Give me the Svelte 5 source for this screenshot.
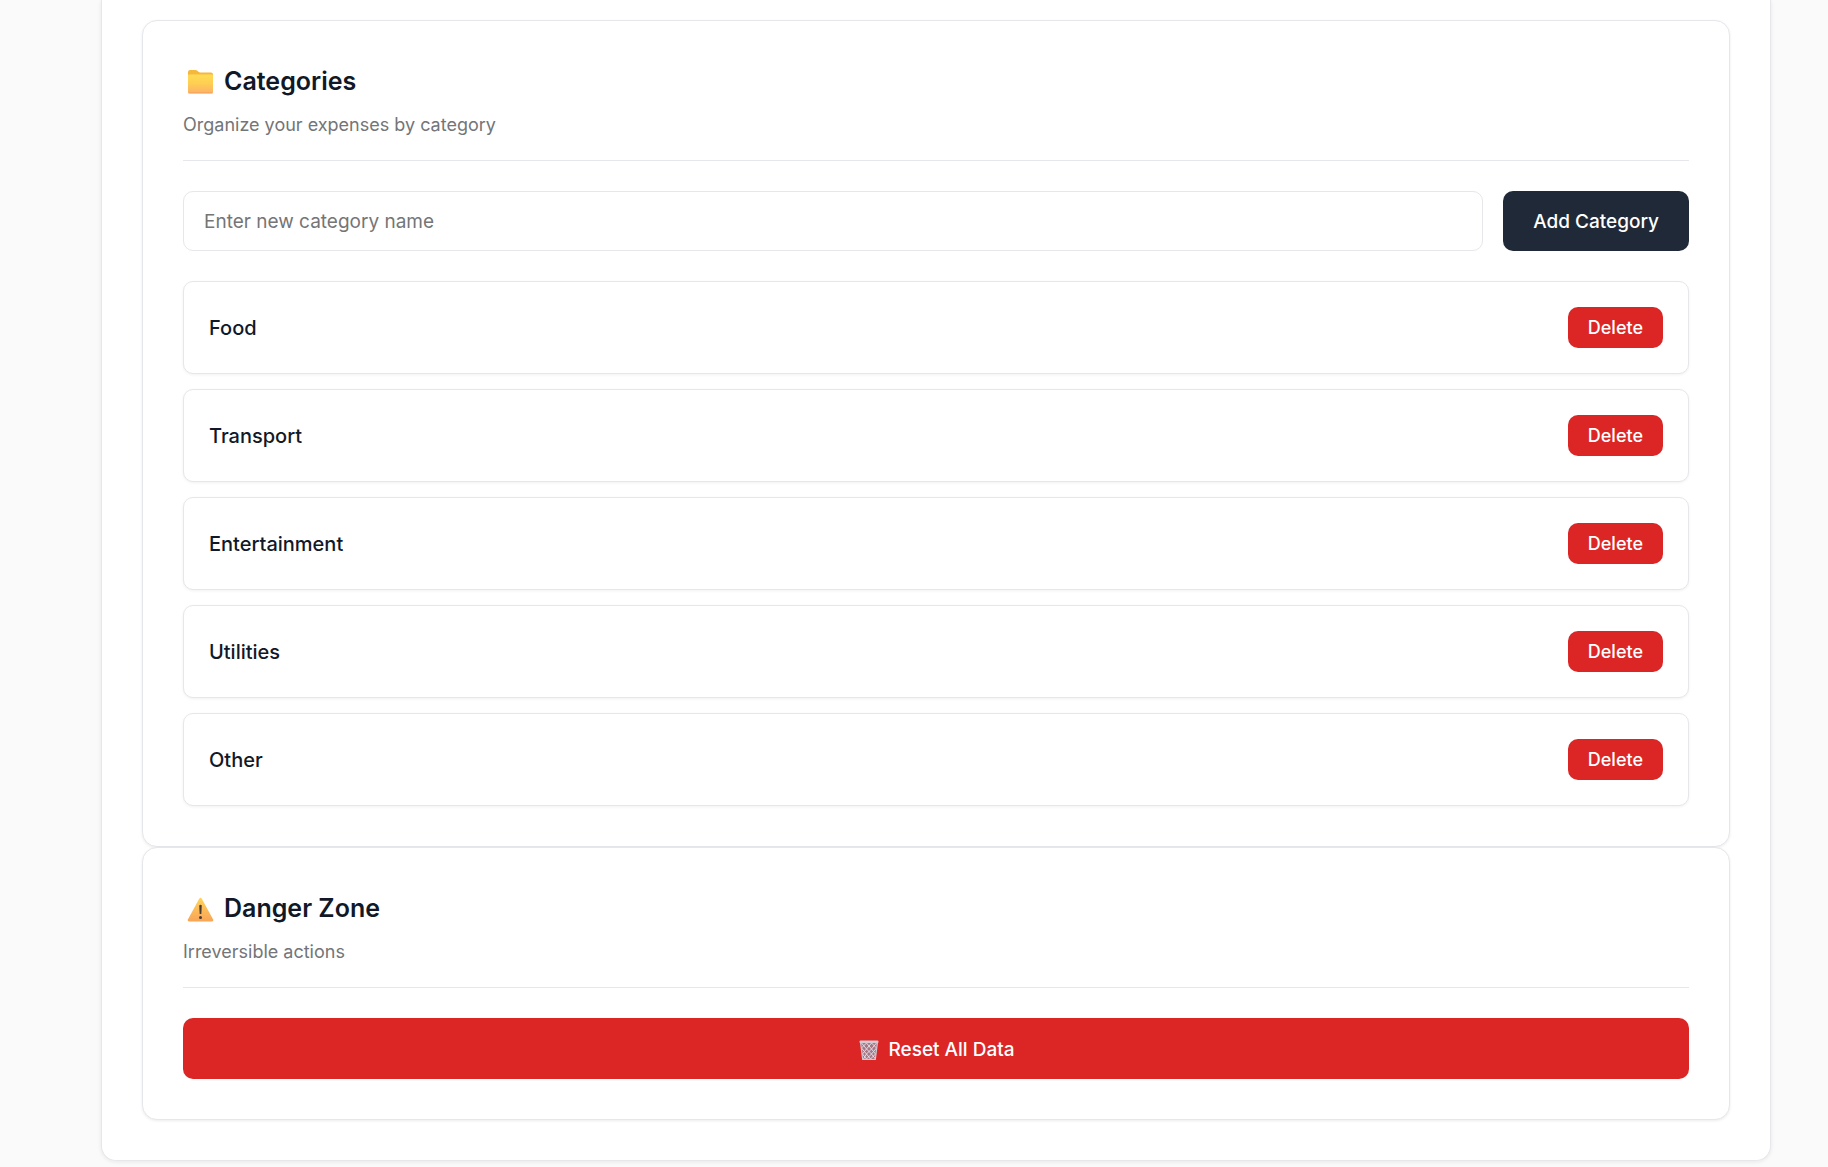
<script lang="ts">
  interface Category {
    id: number;
    name: string;
  }

  const defaults = ['Food', 'Transport', 'Entertainment', 'Utilities', 'Other'];

  let nextId = defaults.length;
  let categories = $state<Category[]>(defaults.map((name, id) => ({ id, name })));
  let newName = $state('');

  function addCategory(ev: SubmitEvent) {
    ev.preventDefault();
    const name = newName.trim();
    if (!name) return;
    categories.push({ id: nextId++, name });
    newName = '';
  }

  function removeCategory(id: number) {
    categories = categories.filter((c) => c.id !== id);
  }

  function resetAll() {
    categories = defaults.map((name) => ({ id: nextId++, name }));
    newName = '';
  }
</script>

<main class="page">
  <div class="panel">
    <section class="card">
      <header class="card-header">
        <h2>
          <svg class="title-icon" viewBox="0 1 32 32" aria-hidden="true">
            <defs>
              <linearGradient id="folder-front" x1="0" y1="0" x2="0" y2="1">
                <stop offset="0" stop-color="#ffdc55" />
                <stop offset="0.45" stop-color="#ffcf52" />
                <stop offset="1" stop-color="#fbb167" />
              </linearGradient>
            </defs>
            <path d="M5 8q0-2 2-2h5.500q1 0 1.800.700l1.200 1.100q.700.700 1.700.700H28q2 0 2 2V14H5z" fill="#f5b83d" />
            <path d="M5 11.500q0-1 1-1h23q1 0 1 1V28q0 1.500-1.500 1.500h-22Q5 29.500 5 28z" fill="url(#folder-front)" />
            <path d="M5.500 28.800h24" stroke="#f2a35c" stroke-width="1" />
          </svg>
          Categories
        </h2>
        <p>Organize your expenses by category</p>
      </header>

      <form class="add-form" onsubmit={addCategory}>
        <input
          type="text"
          placeholder="Enter new category name"
          aria-label="Enter new category name"
          bind:value={newName}
        />
        <button class="btn btn-primary" type="submit">Add Category</button>
      </form>

      <ul class="category-list">
        {#each categories as category (category.id)}
          <li>
            <span>{category.name}</span>
            <button class="btn btn-small btn-danger" type="button" onclick={() => removeCategory(category.id)}>
              Delete
            </button>
          </li>
        {/each}
      </ul>
    </section>

    <section class="card">
      <header class="card-header">
        <h2>
          <svg class="title-icon" viewBox="0 0 32 32" aria-hidden="true">
            <defs>
              <linearGradient id="warning-sign" x1="0" y1="0" x2="0" y2="1">
                <stop offset="0" stop-color="#ffd35c" />
                <stop offset="1" stop-color="#f9a456" />
              </linearGradient>
            </defs>
            <path d="M16.200 6.700q1.300-2 2.600 0L30 27.300q.900 2.200-1.400 2.200H6.400Q4.100 29.500 5 27.300z" fill="url(#warning-sign)" />
            <path d="M16.200 13.500q1.300-1.400 2.600 0l-.500 8.500h-1.600z" fill="#4a3a35" />
            <circle cx="17.500" cy="25.500" r="1.500" fill="#4a3a35" />
          </svg>
          Danger Zone
        </h2>
        <p>Irreversible actions</p>
      </header>

      <button class="btn btn-danger btn-block" type="button" onclick={resetAll}>
        <svg class="btn-icon" viewBox="-1 -1 24 24" aria-hidden="true">
          <path d="M2.500 3h17l-2.200 17.500H4.700z" fill="#a87583" />
          <path
            d="M3.500 4l5 6-4 5 4 5M8.500 4l5 6-5 5 4 5M13.500 4l5 5-5 6 4 5M8.500 4l-5 5 5 6-3 5M13.500 4l-5 6 5 5-5 5M18.500 4l-5 6 4 5-5 5"
            fill="none"
            stroke="#dfdde6"
            stroke-width="1"
          />
          <path d="M2.500 3l2.200 17.500h12.600L19.500 3" fill="none" stroke="#cfc6d0" stroke-width="1.200" />
          <rect x="1.500" y="1.500" width="19" height="2.500" rx="1" fill="#d3cbd3" />
        </svg>
        Reset All Data
      </button>
    </section>
  </div>
</main>

<style>
  :global(body) {
    margin: 0;
    background: #fafafa;
  }

  .page {
    padding: 0 57px 6px 101px;
    font-family: Inter, 'Liberation Sans', sans-serif;
    color: #111827;
  }

  .panel {
    padding: 20px 40px 40px;
    background: #fff;
    border: 1px solid #e5e7eb;
    border-top: 0;
    border-radius: 0 0 15px 15px;
    box-shadow: 0 1px 4px rgba(0, 0, 0, 0.08);
  }

  .card {
    padding: 40px;
    background: #fff;
    border: 1px solid #e5e7eb;
    border-radius: 15px;
    box-shadow: 0 1px 3px rgba(0, 0, 0, 0.08);
  }

  .card-header {
    margin-bottom: 30px;
    padding-bottom: 20px;
    border-bottom: 1px solid #e5e7eb;
  }

  h2 {
    display: flex;
    align-items: center;
    gap: 9px;
    margin: 0 0 8px;
    font-size: 25px;
    font-weight: 600;
    line-height: 40px;
  }

  .title-icon {
    width: 32px;
    height: 32px;
  }

  p {
    margin: 0;
    font-size: 18px;
    line-height: 31px;
    color: #737578;
  }

  .add-form {
    display: flex;
    gap: 20px;
    margin-bottom: 30px;
  }

  input {
    flex: 1;
    min-width: 0;
    box-sizing: border-box;
    height: 60px;
    padding: 0 20px;
    border: 1px solid #e5e7eb;
    border-radius: 10px;
    background: #fff;
    color: #111827;
    font: inherit;
    font-size: 19px;
  }

  input::placeholder {
    color: #757575;
  }

  .btn {
    display: flex;
    align-items: center;
    justify-content: center;
    gap: 7px;
    padding: 16px 30px 14px;
    border: 0;
    border-radius: 10px;
    color: #fff;
    font: inherit;
    font-size: 19px;
    font-weight: 500;
    line-height: 30px;
    cursor: pointer;
  }

  .btn-primary {
    background: #1f2937;
  }

  .btn-danger {
    background: #dc2626;
  }

  .btn-small {
    padding: 10px 20px;
    font-size: 18px;
    line-height: 21px;
  }

  .btn-block {
    width: 100%;
    padding-top: 17px;
  }

  .btn-icon {
    width: 24px;
    height: 24px;
  }

  .category-list {
    display: flex;
    flex-direction: column;
    gap: 15px;
    margin: 0;
    padding: 0;
    list-style: none;
  }

  li {
    display: flex;
    align-items: center;
    justify-content: space-between;
    padding: 25px;
    border: 1px solid #e5e7eb;
    border-radius: 10px;
    background: #fff;
    box-shadow: 0 1px 3px rgba(0, 0, 0, 0.06);
    font-size: 20px;
    font-weight: 500;
  }
</style>
